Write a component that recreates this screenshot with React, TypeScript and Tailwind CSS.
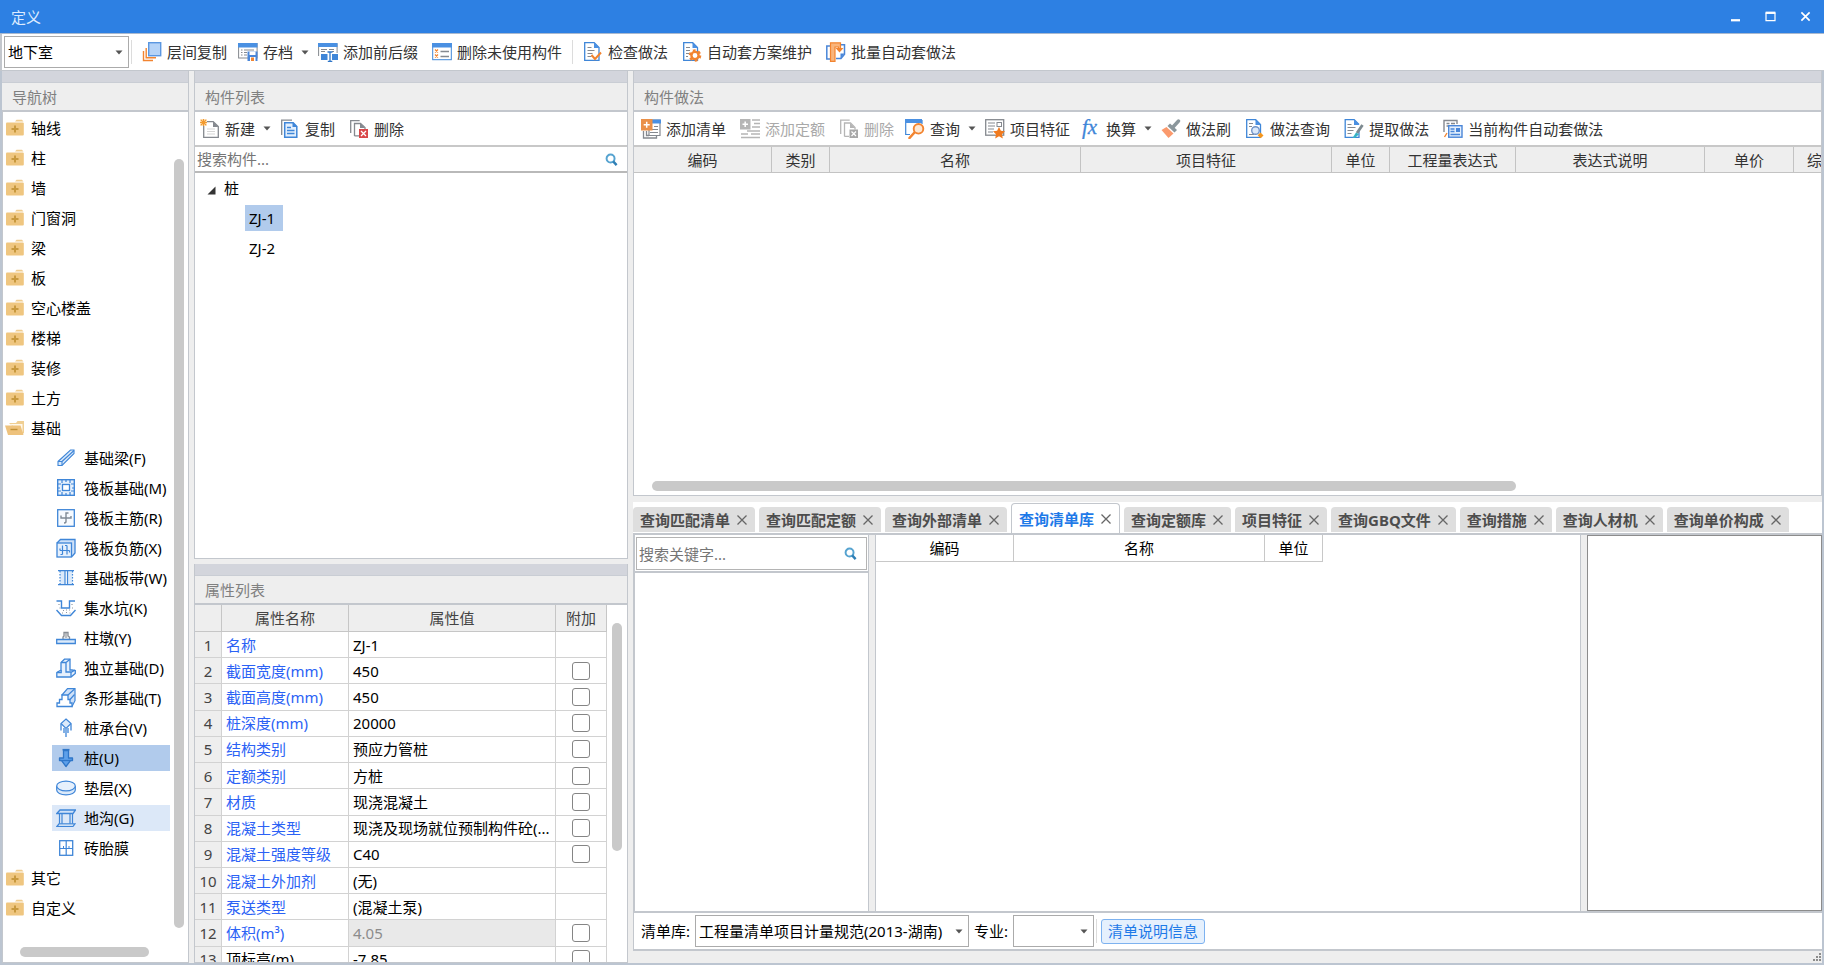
import React, { useState } from "react";
import type { ReactNode } from "react";

const BLUE = "#3f86d8";
const ORANGE = "#f28430";
const GREY = "#85898f";

function Svg({ children, size = "size-5" }: { children: ReactNode; size?: string }) {
  return (
    <svg viewBox="0 0 20 20" className={`${size} shrink-0`} fill="none" aria-hidden="true">
      {children}
    </svg>
  );
}

function Caret({ className = "" }: { className?: string }) {
  return (
    <svg viewBox="0 0 8 5" className={`h-[5px] w-2 shrink-0 ${className}`} aria-hidden="true">
      <path d="M0.5 0.5h7L4 4.5z" fill="#555" />
    </svg>
  );
}

const icons: Record<string, ReactNode> = {
  layers: (
    <Svg>
      <path d="M1.500 9v9.500H11M4.200 6v9.800H14" stroke={ORANGE} strokeWidth="1.400" />
      <rect x="6.700" y="0.700" width="12" height="13" fill="#b5d3f7" stroke="#5b97e0" strokeWidth="1.400" />
    </Svg>
  ),
  archive: (
    <Svg>
      <rect x="0.600" y="1.500" width="18.500" height="14.500" fill="#fff" stroke={GREY} />
      <rect x="0" y="1" width="19.500" height="4.500" fill="#4a90e2" />
      <path d="M3 8h1.500M6 8h10M3 10.500h1.500M6 10.500h3M3 13h1.500M6 13h3" stroke={GREY} />
      <rect x="9.500" y="9.500" width="10" height="9.500" fill="#4a86d8" />
      <rect x="11.500" y="9.500" width="6" height="3.500" fill="#fff" />
      <rect x="12" y="15" width="5.500" height="4" fill="#fff" />
      <rect x="13" y="15.500" width="3" height="3.500" fill={ORANGE} />
    </Svg>
  ),
  affix: (
    <Svg>
      <path d="M0.600 14V1.500h18.500V11" fill="#fff" stroke={GREY} />
      <rect x="0" y="1" width="19.500" height="4" fill="#4a90e2" />
      <path d="M3 7.500h6M11 7.500h5M3 9.500h4M14 9.500h2" stroke={GREY} />
      <path d="M3 12h6.500v6H3zM14 12h6v6h-6z" fill="#3f86d8" />
      <path d="M9.500 10h5M12 10V19M9.800 19.400h4.500" stroke="#2f76c8" strokeWidth="1.300" />
    </Svg>
  ),
  purge: (
    <Svg>
      <rect x="0.700" y="1.700" width="18.600" height="16" fill="#fff" stroke={BLUE} />
      <rect x="0" y="1" width="20" height="4.500" fill="#4a90e2" />
      <path d="M3 7.500l3 3m0-3l-3 3M3 12.500l3 3m0-3l-3 3" stroke={ORANGE} strokeWidth="1.200" />
      <path d="M8.500 9.500H17M8.500 14.500H17" stroke={GREY} strokeWidth="1.300" />
    </Svg>
  ),
  check: (
    <Svg>
      <path d="M1.700 0.700h9.500L16 5.500V18.300H1.700z" fill="#fff" stroke={BLUE} strokeWidth="1.300" />
      <path d="M11 0.500v5.500h5.500z" fill="#4a90e2" />
      <path d="M4.500 5.500h4M4.500 8.500h7M4.500 11.500h5M4.500 14.500h4" stroke={GREY} strokeWidth="1.200" />
      <path d="M8.500 13l3.500 4 6-6.500" stroke={ORANGE} strokeWidth="2" />
    </Svg>
  ),
  gear: (
    <Svg>
      <path d="M1.700 0.700h9L15.500 5.500V18.300H1.700z" fill="#fff" stroke={BLUE} strokeWidth="1.300" />
      <path d="M10.500 0.500v5.500h5.500z" fill="#4a90e2" />
      <path d="M4 5.500h4M4 8.500h4M4 11.500h3M4 14.500h2" stroke={GREY} strokeWidth="1.200" />
      <circle cx="13" cy="13.500" r="5" stroke={ORANGE} strokeWidth="2.600" strokeDasharray="2.600 2.630" />
      <circle cx="13" cy="13.500" r="3.600" fill="#fff" stroke={ORANGE} strokeWidth="2.400" />
    </Svg>
  ),
  batch: (
    <Svg>
      <path d="M4 4H0.800v13H4M12 2.700h6.500v9.500L15 16.500h-5" stroke="#4a86d8" strokeWidth="1.500" />
      <path d="M18.500 11.500H14.500v5z" fill="#4a86d8" />
      <path d="M4.500 0.800h10V7h-2V5H9v14.300H4.500z" fill="#f9b57c" stroke={ORANGE} strokeWidth="1.200" />
      <path d="M9.500 6h8L13.500 10.500z" fill={ORANGE} />
    </Svg>
  ),
  newDoc: (
    <Svg>
      <path d="M3.700 2.700h9.500L18.300 7.500V18.300H3.700z" fill="#fff" stroke={GREY} strokeWidth="1.300" />
      <path d="M13 2.500v5.500h5.500z" fill={GREY} />
      <path d="M7 10h8M7 12.500h8M7 15h8" stroke="#d5d5d5" />
      <rect x="0" y="0" width="7" height="7" fill="#fde3c0" />
      <path d="M3.500 0v7M0 3.500h7M1 1l5 5M6 1l-5 5" stroke="#f29a2e" strokeWidth="1.100" />
    </Svg>
  ),
  copy: (
    <Svg>
      <path d="M1.700 16V1.200H12" stroke={GREY} strokeWidth="1.300" />
      <path d="M4.700 3.700h8.500L16.800 7.500V18.300H4.700z" fill="#e3effd" stroke={BLUE} strokeWidth="1.500" />
      <path d="M12.500 3v5h5z" fill={BLUE} />
      <path d="M7 8.500h4M7 11.500h7.500M7 14.500h7.500" stroke={BLUE} strokeWidth="1.300" />
    </Svg>
  ),
  remove: (
    <Svg>
      <path d="M1.700 14V1.700h9M5.500 17V4.500h6L16 8.500v2M5.500 16.800H10" stroke={GREY} strokeWidth="1.300" />
      <path d="M11 4v5h5z" fill={GREY} />
      <rect x="10" y="10" width="9" height="9" fill="#d9484a" />
      <path d="M12 12l5 5m0-5l-5 5" stroke="#fff" strokeWidth="1.300" />
    </Svg>
  ),
  removeOff: (
    <Svg>
      <path d="M1.700 15V1.200h9M5.500 17.500V4h6L16 8.500v2M5.500 17.300H10" stroke="#b5b5b5" strokeWidth="1.300" />
      <path d="M11 4v5h5z" fill="#b5b5b5" />
      <rect x="10.500" y="10.500" width="8.500" height="8.500" fill="#a8a8a8" />
      <path d="M12.500 12.500l4.500 4.500m0-4.500l-4.500 4.500" stroke="#fff" strokeWidth="1.200" />
    </Svg>
  ),
  addList: (
    <Svg>
      <path d="M8 1h11v15.500H8z" fill="#fff" stroke={GREY} strokeWidth="1.200" />
      <path d="M2.500 12v7h13v-2M5.500 12v4.500H8" stroke={GREY} strokeWidth="1.300" />
      <rect x="11" y="0.500" width="9" height="4" fill="#4a90e2" />
      <path d="M13 7.500h4M9 10.500h8M9 13.500h8" stroke={GREY} />
      <rect x="0" y="0" width="11.500" height="11.500" fill="#ea9048" />
      <path d="M5.700 2.700v6M2.700 5.700h6" stroke="#fff" strokeWidth="1.500" />
    </Svg>
  ),
  addQuota: (
    <Svg>
      <rect x="0" y="0" width="10.500" height="10.500" fill="#b5b5b5" />
      <path d="M5.200 2.500v5.500M2.500 5.200H8" stroke="#fff" strokeWidth="1.500" />
      <path d="M12 1h8M14 4.500h6M12 8h8M7 12h13M1 15h7M11 15h9M1 18.500h19" stroke="#b5b5b5" strokeWidth="1.400" />
    </Svg>
  ),
  query: (
    <Svg>
      <path d="M0.700 1v14.500H5M17 1v4" stroke={BLUE} strokeWidth="1.200" />
      <rect x="0" y="0" width="17" height="4" fill="#4a90e2" />
      <path d="M9.500 13.500L4.500 19" stroke={ORANGE} strokeWidth="2.600" strokeLinecap="round" />
      <circle cx="13.500" cy="9.800" r="4.800" fill="#fde8d4" stroke={ORANGE} strokeWidth="1.900" />
    </Svg>
  ),
  feature: (
    <Svg>
      <rect x="0.700" y="0.700" width="18" height="15.500" fill="#fff" stroke={GREY} strokeWidth="1.300" />
      <path d="M3 4h7M3 7h7M3 10h6M3 13h5" stroke={GREY} strokeWidth="1.200" />
      <rect x="12" y="3.500" width="4.500" height="4" stroke={GREY} />
      <path d="M14 8l1.900 3.800 4.100.5-3 2.900.8 4.300-3.800-2.200-3.800 2.200.8-4.300-3-2.900 4.100-.5z" fill="#f07a1f" />
    </Svg>
  ),
  brush: (
    <Svg>
      <path d="M12.500 7.500L17.500 2" stroke="#8b979c" strokeWidth="3.400" strokeLinecap="round" />
      <path d="M9 4.500l7 6.500-2.500 2.500-7-6.500z" fill="#8b979c" />
      <path d="M5.500 8l7 6.500L7.500 19 0.500 11z" fill="#fb9a6d" />
    </Svg>
  ),
  methodQuery: (
    <Svg>
      <path d="M1.700 0.700h9L15.500 5.500V18.300H1.700z" fill="#fff" stroke={BLUE} strokeWidth="1.300" />
      <path d="M10.500 0.500v5.500H16z" fill="#4a90e2" />
      <path d="M4 4.500h4M4 7.500h3M4 15.500h5" stroke={GREY} strokeWidth="1.200" />
      <circle cx="10.500" cy="11.500" r="3.800" fill="#dbe9fb" stroke="#6f93c8" strokeWidth="1.400" />
      <path d="M15.500 13.500l3 3-2.800 2.800-3-3z" fill="#f5961d" />
    </Svg>
  ),
  extract: (
    <Svg>
      <path d="M15 10v8.300H1.200V0.700h9L15 5.500" fill="#fff" stroke={BLUE} strokeWidth="1.300" />
      <path d="M10 0.500v5.500h5.500z" fill="#4a90e2" />
      <path d="M3.500 5.500h4M3.500 8.500h8M3.500 11.500h6M3.500 14.500h4" stroke={GREY} strokeWidth="1.200" />
      <path d="M18.500 6l-5.500 8" stroke="#7d8a90" strokeWidth="2.800" />
      <path d="M12 13.500l3 1.800-4.200 3.700H8.500z" fill="#35b3c4" />
    </Svg>
  ),
  autoApply: (
    <Svg>
      <path d="M1 13V1.500h13V5" stroke={GREY} strokeWidth="1.400" />
      <path d="M3.500 4.500h3M8 4.500h4M3.500 7h2" stroke={GREY} strokeWidth="1.300" />
      <rect x="5.700" y="6.700" width="13.300" height="11.500" fill="#e3effd" stroke="#4a86d8" strokeWidth="1.400" />
      <rect x="13" y="9" width="4" height="4" fill="#4a86d8" />
      <path d="M7.500 10h4M7.500 12.500h4M7.500 15.500H17" stroke="#4a86d8" strokeWidth="1.300" />
      <path d="M1.500 18l2.500-4" stroke={ORANGE} strokeWidth="1.400" />
    </Svg>
  ),
  fx: (
    <svg viewBox="0 0 20 20" className="size-5 shrink-0" aria-hidden="true">
      <text x="1" y="15" fontFamily="Liberation Serif, serif" fontStyle="italic" fontSize="21" fill="#3f86d8" stroke="#3f86d8" strokeWidth="0.300">
        fx
      </text>
    </svg>
  ),
  // component kinds in the navigation tree
  beam: (
    <Svg>
      <path d="M2 13.500L14.500 2H18v3.500L6 17.500H2z" fill="#dceafa" stroke={BLUE} strokeWidth="1.100" />
      <path d="M2 13.500h4v4M6 13.500L18 2.500" stroke={BLUE} strokeWidth="1.100" />
    </Svg>
  ),
  raft: (
    <Svg>
      <rect x="1.700" y="1.700" width="16.600" height="15.600" fill="#e6f0fc" stroke={BLUE} strokeWidth="1.400" />
      <rect x="6.500" y="6.500" width="7" height="6" fill="#fff" stroke={BLUE} strokeWidth="1.300" />
      <path d="M6 2v3M10 2v2M14 2v3M6 17v-3M10 17v-2M14 17v-3M2 6h3M2 10h2M2 13h3M18 6h-3M18 10h-2M18 13h-3" stroke={BLUE} strokeWidth="1.200" />
    </Svg>
  ),
  rebar: (
    <Svg>
      <rect x="1.700" y="1.700" width="16.600" height="16.600" fill="#f6faff" stroke={BLUE} strokeWidth="1.300" />
      <path d="M12.500 5H10v8.500Q10 15 8 15M5 7.500V10h10V8" stroke="#7f8a96" strokeWidth="1.400" />
    </Svg>
  ),
  rebarNeg: (
    <Svg>
      <path d="M1 5l3.500-3.500H19V15l-3 3.500" fill="#cfe1f8" stroke={BLUE} strokeWidth="1.300" />
      <rect x="1" y="5" width="14.500" height="14" fill="#e6f0fc" stroke={BLUE} strokeWidth="1.300" />
      <path d="M6.500 7.500v9M4.500 16.500h2M11 7.500v9M9 7.500h2M4 12.500h9.500M4 10.500v2M13.500 12.500v2" stroke={BLUE} strokeWidth="1.200" />
    </Svg>
  ),
  strip: (
    <Svg>
      <path d="M4 3h5v14H4zM11.500 3h5v14h-5z" fill="#dceafa" />
      <path d="M2 2.700h16M2 16.700h16" stroke={BLUE} strokeWidth="1.300" />
      <path d="M4 3v14M16.500 3v14" stroke={BLUE} strokeWidth="1.200" strokeDasharray="1.500 1.500" />
      <path d="M9 3v14M11.500 3v14" stroke={BLUE} strokeWidth="1.200" />
    </Svg>
  ),
  sump: (
    <Svg>
      <path d="M0.500 3H5.500v7h8V3h5.500" stroke={BLUE} strokeWidth="1.400" />
      <path d="M0.500 12l5 5.500h9L19.500 12" stroke={BLUE} strokeWidth="1.400" />
      <path d="M3 6v1M3.500 10h1M7 12.500h1M10 14.500h1M13 12h1M16 10h1M16 6v1M6 15h1M13.500 15h1M10 12h1" stroke="#8d97a3" strokeWidth="1.200" />
    </Svg>
  ),
  pier: (
    <Svg>
      <path d="M7 11.500V9l1-1V4.500h4V8l1.500 1v2.500" fill="#eee" stroke="#878d94" strokeWidth="1.300" />
      <path d="M10 5v5" stroke="#878d94" />
      <path d="M0.700 11.500h18.600v4H0.700z" fill="#dceafa" stroke={BLUE} strokeWidth="1.300" />
    </Svg>
  ),
  isolated: (
    <Svg>
      <path d="M0.800 14.500L5 12V4.500L8.500 1.200H14V12h2l3.300 0.500v3L15 19H0.800z" fill="#e6f0fc" stroke={BLUE} strokeWidth="1.300" />
      <path d="M5.200 4.500H10V14h5v4.500M10 4.500L14 1.200M15 14.500l4-2.500M1 14.500h4.200V12" stroke={BLUE} strokeWidth="1.300" />
    </Svg>
  ),
  stepped: (
    <Svg>
      <path d="M6 7l5.500-6.300h7.500v12l-3 5.800z" fill="#cfe1f8" stroke={BLUE} strokeWidth="1.200" />
      <path d="M1 18.500V15h2.500v-3.500H6V7h6v4.500h2V15h2v3.500z" fill="#fff" stroke={BLUE} strokeWidth="1.300" />
      <path d="M12 7l6.500-6M14 11.500l4.500-5" stroke={BLUE} strokeWidth="1.200" />
    </Svg>
  ),
  cap: (
    <Svg>
      <path d="M10 1l5 4.500-5 5-5-5z" fill="#dceafa" stroke={BLUE} strokeWidth="1.200" />
      <path d="M5 6v6.500M15 6v6.500M8 10v5M12 10v5M10 11v8" stroke={BLUE} strokeWidth="1.300" />
    </Svg>
  ),
  pile: (
    <Svg>
      <path d="M7.500 2.500h5V10h4v2.500h-2L10 18.500 5.500 12.500h-2V10h4z" fill="#5da0ea" stroke="#2f76c8" strokeWidth="1.300" strokeLinejoin="round" />
      <path d="M6.500 1.700h7" stroke="#2f76c8" strokeWidth="1.600" />
      <path d="M6 12.500h8" stroke="#2f76c8" strokeWidth="1.300" />
    </Svg>
  ),
  cushion: (
    <Svg>
      <path d="M0.700 8v4c0 2.800 4 4.800 9.300 4.800s9.300-2 9.300-4.800V8" fill="#dceafa" stroke={BLUE} strokeWidth="1.200" />
      <ellipse cx="10" cy="8" rx="9.300" ry="4.900" fill="#e6f0fc" stroke={BLUE} strokeWidth="1.200" />
    </Svg>
  ),
  trench: (
    <Svg>
      <path d="M0.800 5.500L4 2h15.500L17 5.500z" fill="#cfe1f8" stroke={BLUE} strokeWidth="1.300" />
      <path d="M3.500 6v10M6 6v10M14 6v10M16.500 6v10" stroke={BLUE} strokeWidth="1.200" />
      <path d="M1 18.300h16l2-2.500H3z" fill="#fff" stroke={BLUE} strokeWidth="1.300" />
    </Svg>
  ),
  mould: (
    <Svg>
      <rect x="3.700" y="2.700" width="13" height="14.600" fill="#fff" stroke={BLUE} strokeWidth="1.300" />
      <path d="M10.200 3v14M4 10.500h13" stroke={BLUE} strokeWidth="1.200" />
      <path d="M7.500 8v2M13 8v2" stroke={BLUE} />
    </Svg>
  ),
};

function Folder({ open }: { open?: boolean }) {
  return open ? (
    <Svg>
      <path d="M4 5h7l1.500-2H19v12l-2 1.500z" fill="#f0cf93" />
      <path d="M5 6h12.500v8" fill="#fff8ea" />
      <path d="M0 7.500h15.500L18.500 17H3z" fill="#eec27c" />
      <path d="M5.500 11.500h7" stroke="#c08f35" strokeWidth="1.400" />
    </Svg>
  ) : (
    <Svg>
      <path d="M10 3.500l1.500-1.700H17L18.500 3.500z" fill="#f0cc8e" />
      <rect x="1" y="4.500" width="17.800" height="13" rx="1" fill="#efc680" />
      <path d="M10 7.500v7M6.500 11h7" stroke="#c8993f" strokeWidth="2" />
    </Svg>
  );
}

function SearchIcon() {
  return (
    <svg viewBox="0 0 14 14" className="size-[13px] shrink-0" fill="none" aria-hidden="true">
      <circle cx="6" cy="6" r="4.300" stroke="#56a3d0" strokeWidth="2.100" />
      <path d="M8.800 9l3.700 4" stroke="#2f7fb5" strokeWidth="2.600" />
    </svg>
  );
}

function ToolButton({ icon, label, menu, disabled }: { icon: string; label: string; menu?: boolean; disabled?: boolean }) {
  return (
    <button
      type="button"
      disabled={disabled}
      className={`flex h-[26px] shrink-0 items-center gap-[5px] whitespace-nowrap text-[#333] disabled:text-[#a9a9a9] ${
        menu ? "pr-px pl-[3px]" : "px-1.5"
      }`}
    >
      {icons[icon]}
      <span>{label}</span>
      {menu && <Caret className="ml-[3px]" />}
    </button>
  );
}

function Separator() {
  return <div className="mx-0.5 h-6 w-px shrink-0 bg-[#dcdcdc]" />;
}

function PanelTitle({ children }: { children: ReactNode }) {
  return (
    <div className="shrink-0">
      <div className="h-3 border-b border-[#c9cdd4] bg-[#d3d5dc]" />
      <h2 className="flex h-[29px] items-center border-b-2 border-[#c3c7cd] bg-[#eee] px-2.5 text-[#808080]">{children}</h2>
    </div>
  );
}

const groupsBefore = ["轴线", "柱", "墙", "门窗洞", "梁", "板", "空心楼盖", "楼梯", "装修", "土方"];
const foundation: [string, string][] = [
  ["beam", "基础梁(F)"],
  ["raft", "筏板基础(M)"],
  ["rebar", "筏板主筋(R)"],
  ["rebarNeg", "筏板负筋(X)"],
  ["strip", "基础板带(W)"],
  ["sump", "集水坑(K)"],
  ["pier", "柱墩(Y)"],
  ["isolated", "独立基础(D)"],
  ["stepped", "条形基础(T)"],
  ["cap", "桩承台(V)"],
  ["pile", "桩(U)"],
  ["cushion", "垫层(X)"],
  ["trench", "地沟(G)"],
  ["mould", "砖胎膜"],
];

function Group({ label, open }: { label: string; open?: boolean }) {
  return (
    <li>
      <button type="button" className="flex h-[30px] w-full items-center gap-[6px] pl-0.5 text-black">
        <Folder open={open} />
        {label}
      </button>
    </li>
  );
}

function NavigationPanel() {
  return (
    <section className="flex w-[187px] shrink-0 flex-col border-r border-[#c3c7cd]">
      <PanelTitle>导航树</PanelTitle>
      <div className="flex min-h-0 flex-1 flex-col border-b border-l border-[#c3c7cd] bg-white">
        <div className="flex min-h-0 flex-1">
          <ul className="min-w-0 flex-1 overflow-hidden pt-px">
            {groupsBefore.map((g) => (
              <Group key={g} label={g} />
            ))}
            <Group label="基础" open />
            {foundation.map(([icon, label]) => (
              <li key={label} className="flex h-[30px] items-center pl-[49px]">
                <button
                  type="button"
                  className={`flex h-[26px] w-[118px] items-center gap-2 whitespace-nowrap pl-1 text-black ${
                    icon === "pile" ? "bg-[#b1cbec]" : icon === "trench" ? "bg-[#dce8f8]" : ""
                  }`}
                >
                  {icons[icon]}
                  {label}
                </button>
              </li>
            ))}
            <Group label="其它" />
            <Group label="自定义" />
          </ul>
          <div className="w-[14px] shrink-0 pt-[47px] pb-[7px]">
            <div className="h-full w-2.5 rounded-full bg-[#c9c9c9]" />
          </div>
        </div>
        <div className="h-[27px] shrink-0 pt-3 pl-[17px]">
          <div className="h-2.5 w-[129px] rounded-full bg-[#c9c9c9]" />
        </div>
      </div>
    </section>
  );
}

function ComponentList() {
  return (
    <section className="flex h-[488px] shrink-0 flex-col border-x border-b border-[#c3c7cd] bg-white">
      <PanelTitle>构件列表</PanelTitle>
      <div className="flex h-[35px] shrink-0 items-center gap-0.5 border-b-2 border-[#c8c8c8] pl-0.5">
        <ToolButton icon="newDoc" label="新建" menu />
        <ToolButton icon="copy" label="复制" />
        <ToolButton icon="remove" label="删除" />
      </div>
      <label className="flex h-[26px] shrink-0 items-center border-b-2 border-[#b9b9b9] pr-[9px] pl-0.5">
        <input aria-label="搜索构件" placeholder="搜索构件..." className="h-full min-w-0 flex-1 outline-none placeholder:text-[#757575]" />
        <SearchIcon />
      </label>
      <ul className="text-black">
        <li className="flex h-[30px] items-center gap-2 pl-3">
          <svg viewBox="0 0 9 9" className="mt-1 size-[9px]" aria-hidden="true">
            <path d="M8.500 0.500v8h-8z" fill="#333" />
          </svg>
          桩
        </li>
        {["ZJ-1", "ZJ-2"].map((n, i) => (
          <li key={n} className="flex h-[30px] items-center pl-[50px]">
            <button type="button" className={`h-[26px] w-[38px] pl-1 text-left ${i === 0 ? "bg-[#b1cbec]" : ""}`}>
              {n}
            </button>
          </li>
        ))}
      </ul>
    </section>
  );
}

type Prop = { name: string; value: string; box?: boolean; locked?: boolean; plain?: boolean };
const props: Prop[] = [
  { name: "名称", value: "ZJ-1" },
  { name: "截面宽度(mm)", value: "450", box: true },
  { name: "截面高度(mm)", value: "450", box: true },
  { name: "桩深度(mm)", value: "20000", box: true },
  { name: "结构类别", value: "预应力管桩", box: true },
  { name: "定额类别", value: "方桩", box: true },
  { name: "材质", value: "现浇混凝土", box: true },
  { name: "混凝土类型", value: "现浇及现场就位预制构件砼(...", box: true },
  { name: "混凝土强度等级", value: "C40", box: true },
  { name: "混凝土外加剂", value: "(无)" },
  { name: "泵送类型", value: "(混凝土泵)" },
  { name: "体积(m³)", value: "4.05", box: true, locked: true },
  { name: "顶标高(m)", value: "-7.85", box: true, plain: true },
];

function PropertyList() {
  return (
    <section className="flex min-h-0 flex-1 flex-col border border-t-0 border-[#c3c7cd] bg-white">
      <PanelTitle>属性列表</PanelTitle>
      <div className="flex min-h-0 flex-1 overflow-hidden">
        <table className="h-[368px] min-w-0 flex-1 table-fixed border-separate border-spacing-0 text-left leading-5">
          <colgroup>
            <col className="w-[27px]" />
            <col className="w-[127px]" />
            <col />
            <col className="w-[51px]" />
          </colgroup>
          <thead>
            <tr className="h-[27px] bg-[#eee] text-center text-[#444] *:border-r *:border-b *:border-[#c6c6c6] *:p-0 *:font-normal">
              <th aria-label="序号" />
              <th>属性名称</th>
              <th>属性值</th>
              <th>附加</th>
            </tr>
          </thead>
          <tbody>
            {props.map((p, i) => (
              <tr key={p.name} className="*:border-r *:border-b *:border-[#d2d2d2] *:py-0">
                <th className="bg-[#eee] px-0 text-center font-normal text-[#444]">{i + 1}</th>
                <td className={`px-1 whitespace-nowrap ${p.plain ? "text-black" : "text-[#2b62f5]"}`}>{p.name}</td>
                <td className={`overflow-hidden px-1 whitespace-nowrap ${p.locked ? "bg-[#e9e9e9] text-[#8c8c8c]" : "text-black"}`}>
                  {p.value}
                </td>
                <td className="px-0 text-center">
                  {p.box && (
                    <input
                      type="checkbox"
                      aria-label={`附加 ${p.name}`}
                      className="mx-auto block size-[18px] appearance-none rounded-[3px] border border-[#858585] bg-white checked:bg-[#4a90e2]"
                    />
                  )}
                </td>
              </tr>
            ))}
          </tbody>
        </table>
        <div className="w-5 shrink-0 pt-[18px] pl-[5px]">
          <div className="h-[228px] w-2.5 rounded-full bg-[#c9c9c9]" />
        </div>
      </div>
    </section>
  );
}

function MethodPanel() {
  const head = "h-[26px] border-r border-b border-[#c3c3c3] p-0 font-normal whitespace-nowrap overflow-hidden";
  return (
    <section className="flex h-[425px] shrink-0 flex-col border-x border-b border-[#c3c7cd] bg-white">
      <PanelTitle>构件做法</PanelTitle>
      <div className="flex h-[35px] shrink-0 items-center gap-0.5 border-b-2 border-[#c8c8c8] pl-px">
        <ToolButton icon="addList" label="添加清单" />
        <ToolButton icon="addQuota" label="添加定额" disabled />
        <ToolButton icon="removeOff" label="删除" disabled />
        <ToolButton icon="query" label="查询" menu />
        <ToolButton icon="feature" label="项目特征" />
        <ToolButton icon="fx" label="换算" menu />
        <ToolButton icon="brush" label="做法刷" />
        <ToolButton icon="methodQuery" label="做法查询" />
        <ToolButton icon="extract" label="提取做法" />
        <ToolButton icon="autoApply" label="当前构件自动套做法" />
      </div>
      <div className="min-h-0 flex-1 overflow-hidden">
        <table className="w-full table-fixed border-separate border-spacing-0 bg-[#eee] text-center text-[#333]">
          <thead>
            <tr>
              <th className={`${head} w-[138px]`}>编码</th>
              <th className={`${head} w-[58px]`}>类别</th>
              <th className={`${head} w-[251px]`}>名称</th>
              <th className={`${head} w-[251px]`}>项目特征</th>
              <th className={`${head} w-[58px]`}>单位</th>
              <th className={`${head} w-[126px]`}>工程量表达式</th>
              <th className={`${head} w-[189px]`}>表达式说明</th>
              <th className={`${head} w-[89px]`}>单价</th>
              <th className="overflow-hidden border-b border-[#c3c3c3] p-0 pl-[13px] text-left font-normal whitespace-nowrap">综合单价</th>
            </tr>
          </thead>
        </table>
      </div>
      <div className="h-[14px] shrink-0 pl-[18px]">
        <div className="h-2.5 w-[864px] rounded-full bg-[#c9c9c9]" />
      </div>
    </section>
  );
}

const tabs = ["查询匹配清单", "查询匹配定额", "查询外部清单", "查询清单库", "查询定额库", "项目特征", "查询GBQ文件", "查询措施", "查询人材机", "查询单价构成"];

function TabStrip() {
  const [active, setActive] = useState("查询清单库");
  return (
    <div className="flex h-[33px] shrink-0 items-end gap-1 border-b-2 border-[#c3c7cd] bg-white">
      {tabs.map((t) => {
        const on = t === active;
        return (
          <div
            key={t}
            className={`flex shrink-0 items-center gap-1.5 rounded-t-[4px] px-[7px] font-bold whitespace-nowrap ${
              on ? "h-[30px] border border-b-0 border-[#c3c7cd] bg-white text-[#1f7ae8]" : "mb-px h-[25px] bg-[#dedede] text-[#4d4d4d]"
            }`}
          >
            <button type="button" onClick={() => setActive(t)}>
              {t}
            </button>
            <button type="button" aria-label={`关闭 ${t}`}>
              <svg viewBox="0 0 12 12" className="size-3" fill="none" aria-hidden="true">
                <path d="M1.500 1.500l9 9m0-9l-9 9" stroke="#666" strokeWidth="1.300" />
              </svg>
            </button>
          </div>
        );
      })}
    </div>
  );
}

function Select({ id, className, options }: { id: string; className: string; options: string[] }) {
  return (
    <div className={`relative h-8 shrink-0 ${className}`}>
      <select id={id} aria-label={id} className="size-full appearance-none border border-[#ababab] bg-white pr-5 pl-[3px] text-black outline-none">
        {options.map((o) => (
          <option key={o}>{o}</option>
        ))}
      </select>
      <Caret className="pointer-events-none absolute top-[14px] right-[6px]" />
    </div>
  );
}

function QueryPanel() {
  const head = "h-[27px] border-r border-b border-[#c8c8c8] p-0 font-normal";
  return (
    <section className="flex min-h-0 flex-1 flex-col">
      <TabStrip />
      <div className="flex min-h-0 flex-1 border-l border-[#c3c7cd]">
        <div className="flex w-[235px] shrink-0 flex-col border-x border-[#c3c7cd] bg-white">
          <div className="border-b-2 border-[#c3c7cd] p-px pt-0.5">
            <label className="flex h-[33px] items-center border border-[#b4b4b4] pr-[9px] pl-0.5">
              <input aria-label="搜索关键字" placeholder="搜索关键字..." className="h-full min-w-0 flex-1 outline-none placeholder:text-[#757575]" />
              <SearchIcon />
            </label>
          </div>
        </div>
        <div className="ml-[6px] min-w-0 flex-1 border-x border-[#c3c7cd] bg-white">
          <table className="table-fixed border-separate border-spacing-0 text-center text-black">
            <thead>
              <tr>
                <th className={`${head} w-[138px]`}>编码</th>
                <th className={`${head} w-[251px]`}>名称</th>
                <th className={`${head} w-[58px]`}>单位</th>
              </tr>
            </thead>
          </table>
        </div>
        <div className="ml-[6px] w-[235px] shrink-0 border border-[#8c8c8c] bg-white" />
      </div>
      <div className="flex h-10 shrink-0 items-center border-y-2 border-l border-[#c3c7cd] bg-white pl-[7px]">
        <label htmlFor="清单库" className="mr-[5px] text-black">
          清单库:
        </label>
        <Select id="清单库" className="w-[274px]" options={["工程量清单项目计量规范(2013-湖南)"]} />
        <label htmlFor="专业" className="mx-[5px] text-black">
          专业:
        </label>
        <Select id="专业" className="w-[81px]" options={[""]} />
        <Separator />
        <button type="button" className="ml-0.5 h-[25px] rounded-[3px] border border-[#7db2f0] bg-[#e5f0fd] px-1.5 text-[#1f7ae8]">
          清单说明信息
        </button>
      </div>
    </section>
  );
}

export default function App() {
  return (
    <div className="flex h-screen flex-col overflow-hidden border-b-2 border-[#bcc5d1] bg-[#eee] font-['Noto_Sans','Noto_Sans_CJK_SC',sans-serif] text-[15px] leading-5">
      <header className="flex h-[34px] shrink-0 items-center justify-between border-b border-[#a9b9cf] bg-[#2d80e3] px-[11px] text-white">
        <h1 className="text-[#dcebff]">定义</h1>
        <div className="flex gap-5">
          <button type="button" aria-label="最小化">
            <Svg size="size-[15px]">
              <path d="M4 15h12" stroke="#fff" strokeWidth="3" />
            </Svg>
          </button>
          <button type="button" aria-label="最大化">
            <Svg size="size-[15px]">
              <path d="M4 5.500h12v10H4z" stroke="#fff" strokeWidth="1.600" />
              <path d="M3.500 5h13" stroke="#fff" strokeWidth="3" />
            </Svg>
          </button>
          <button type="button" aria-label="关闭">
            <Svg size="size-[15px]">
              <path d="M4.500 4.500l11 11m0-11l-11 11" stroke="#fff" strokeWidth="2.200" />
            </Svg>
          </button>
        </div>
      </header>
      <div className="flex h-[37px] shrink-0 items-center gap-0.5 border-b border-l-2 border-[#c3c7cd] bg-white pl-0.5">
        <Select id="楼层" className="w-[125px]" options={["地下室"]} />
        <div className="mr-0.5 h-6 w-px shrink-0 bg-[#dcdcdc]" />
        <ToolButton icon="layers" label="层间复制" />
        <ToolButton icon="archive" label="存档" menu />
        <ToolButton icon="affix" label="添加前后缀" />
        <ToolButton icon="purge" label="删除未使用构件" />
        <Separator />
        <ToolButton icon="check" label="检查做法" />
        <ToolButton icon="gear" label="自动套方案维护" />
        <ToolButton icon="batch" label="批量自动套做法" />
      </div>
      <main className="flex min-h-0 flex-1 gap-[5px] border-x-2 border-[#bcc5d1]">
        <NavigationPanel />
        <div className="flex w-[434px] shrink-0 flex-col gap-[5px]">
          <ComponentList />
          <PropertyList />
        </div>
        <div className="flex min-w-0 flex-1 flex-col">
          <MethodPanel />
          <div className="h-[6px] shrink-0" />
          <QueryPanel />
          <div className="flex h-3 shrink-0 items-center justify-end">
            <svg viewBox="0 0 10 10" className="size-2.5" aria-hidden="true">
              <path d="M7 1h2v2H7zM4 4h2v2H4zM7 4h2v2H7zM1 7h2v2H1zM4 7h2v2H4zM7 7h2v2H7z" fill="#8c8c8c" />
            </svg>
          </div>
        </div>
      </main>
    </div>
  );
}
